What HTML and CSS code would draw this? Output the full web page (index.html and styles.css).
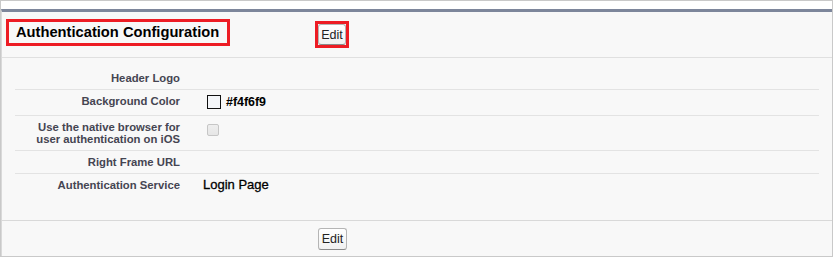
FILE: index.html
```html
<!DOCTYPE html>
<html lang="en">
<head>
<meta charset="utf-8">
<title>Authentication Configuration</title>
<link rel="stylesheet" href="styles.css">
</head>
<body>
<div class="frame">
  <div class="panel">
    <div class="pb-header">
      <h2 class="title mark">Authentication Configuration</h2>
      <div class="header-btn mark"><button class="btn" type="button">Edit</button></div>
    </div>
    <div class="pb-body">
      <div class="row row-first">
        <div class="label">Header Logo</div>
        <div class="data"></div>
      </div>
      <div class="row">
        <div class="label">Background Color</div>
        <div class="data color-value"><span class="swatch"></span><span class="hex">#f4f6f9</span></div>
      </div>
      <div class="row">
        <div class="label">Use the native browser for<br>user authentication on iOS</div>
        <div class="data"><input class="check" type="checkbox" disabled></div>
      </div>
      <div class="row">
        <div class="label">Right Frame URL</div>
        <div class="data"></div>
      </div>
      <div class="row row-last">
        <div class="label">Authentication Service</div>
        <div class="data value">Login Page</div>
      </div>
    </div>
    <div class="pb-footer">
      <button class="btn btn-footer" type="button">Edit</button>
    </div>
  </div>
</div>
</body>
</html>
```
FILE: styles.css
```css
* { box-sizing: border-box; }
html, body { margin: 0; padding: 0; background: #fff; }
body { font-family: "Liberation Sans", Arial, sans-serif; }

.frame {
  width: 833px;
  height: 257px;
  border: 1px solid #c9c9c9;
  padding-top: 8px;
  background: #fff;
}

.panel {
  height: 100%;
  background: #f8f8f8;
  border-top: 3px solid #7d869b;
  border-left: 1px solid #d9d9d9;
  display: flex;
  flex-direction: column;
}

.pb-header {
  display: flex;
  align-items: flex-start;
  height: 46px;
  padding: 7px 0 0 4px;
  border-bottom: 1px solid #e0e0e0;
}

.mark { border: 3px solid #ed1c24; }

.title {
  margin: 0;
  width: 224px;
  height: 27px;
  padding: 0 0 0 7px;
  font-size: 14.7px;
  line-height: 21px;
  font-weight: bold;
  color: #000;
}

.header-btn {
  display: flex;
  margin: 2px 0 0 85px;
}

.btn {
  width: 28px;
  height: 21px;
  padding: 0;
  margin: 0;
  font-family: "Liberation Sans", Arial, sans-serif;
  font-size: 12.5px;
  color: #222;
  background: linear-gradient(#ffffff, #f1f1f1);
  border: 1px solid #b5b5b5;
  border-bottom-color: #8a8a8a;
  border-radius: 3px;
  text-align: center;
}

.pb-body {
  flex: 1;
  padding: 9px 13px 0 13px;
}

.row {
  display: flex;
  padding: 5px 0;
  border-bottom: 1px solid #e3e3e3;
}
.row-last { border-bottom: none; }

.label {
  width: 165px;
  flex: none;
  text-align: right;
  font-size: 11.3px;
  line-height: 12px;
  font-weight: bold;
  color: #454552;
}

.data {
  flex: 1;
  padding-left: 23px;
  font-size: 13px;
  line-height: 12px;
  color: #000;
}

.color-value {
  display: flex;
  align-items: center;
  height: 15px;
}
.swatch {
  width: 14px;
  height: 14px;
  margin: 0 5px 1px 4px;
  border: 1px solid #111;
  background: #f4f6f9;
}
.hex {
  font-size: 12.4px;
  font-weight: bold;
  margin-bottom: 1px;
}

.check {
  -webkit-appearance: none;
  appearance: none;
  display: block;
  width: 12px;
  height: 12px;
  margin: 3px 0 0 4px;
  border: 1px solid #c6c6c6;
  border-radius: 2px;
  background: linear-gradient(#eeeeee, #e6e6e6);
}

.value {
  font-size: 13px;
  line-height: 12px;
  -webkit-text-stroke: 0.3px #000;
}

.pb-footer {
  height: 36px;
  padding: 7px 0 0 316px;
  border-top: 1px solid #d9d9d9;
}
.btn-footer { width: 29px; height: 22px; }
```
